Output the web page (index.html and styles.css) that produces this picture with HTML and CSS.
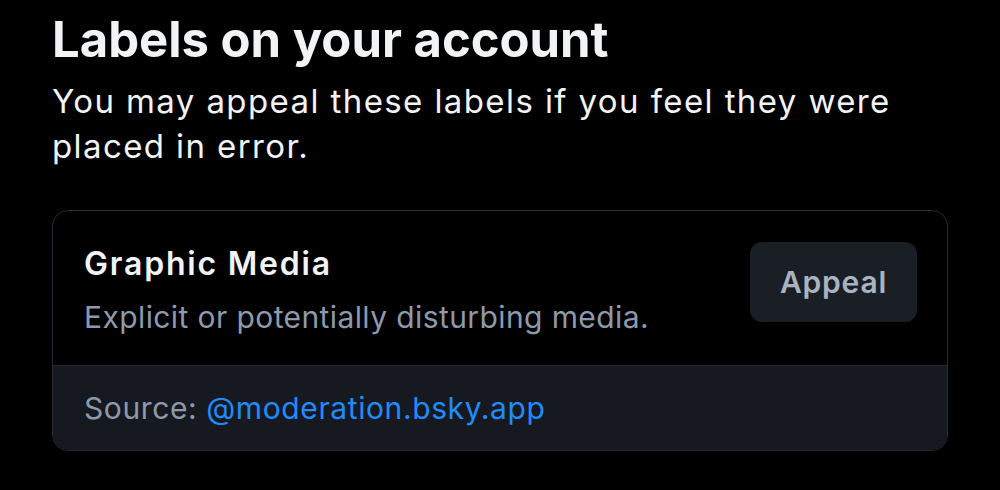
FILE: index.html
```html
<!DOCTYPE html>
<html>
<head lang="en">
    <meta charset="UTF-8">
    <title>Labels on your account</title>
    <link rel="stylesheet" href="styles.css">
</head>
<body>
    <div id="page">
        <h1 class="title">Labels on your account</h1>
        <p class="intro">You may appeal these labels if you feel they were placed in error.</p>
        <div class="card">
            <div class="card-main">
                <div class="card-text">
                    <div class="label-name">Graphic Media</div>
                    <div class="label-desc">Explicit or potentially disturbing media.</div>
                </div>
                <button class="appeal">Appeal</button>
            </div>
            <div class="card-source">
                Source: <a href="#" class="source-link">@moderation.bsky.app</a>
            </div>
        </div>
    </div>
</body>
</html>
```

FILE: styles.css
```css
*{
    margin: 0;
    padding: 0;
    box-sizing: border-box;
}
body{
    background: #000;
    color: #f1f3f5;
    font-family: Inter, "Noto Sans", sans-serif;
}
#page{
    width: 896px;
    margin-left: 52px;
    padding-top: 10px;
}
.title{
    font-size: 49px;
    font-weight: 700;
    line-height: 60px;
    letter-spacing: 0;
}
.intro{
    font-size: 33px;
    line-height: 45px;
    letter-spacing: 1.4px;
    margin-top: 9px;
}
.card{
    margin-top: 41px;
    border: 1px solid #272c34;
    border-radius: 16px;
    overflow: hidden;
}
.card-main{
    display: flex;
    align-items: flex-start;
    justify-content: space-between;
    padding: 33px 30px 0 31px;
    height: 155px;
    border-bottom: 1px solid #272c34;
}
.label-name{
    font-size: 32px;
    font-weight: 600;
    line-height: 40px;
    letter-spacing: 1.8px;
}
.label-desc{
    font-size: 30px;
    line-height: 40px;
    letter-spacing: 0.4px;
    margin-top: 13px;
    color: #8d9aab;
}
.appeal{
    width: 167px;
    height: 80px;
    margin-top: -2px;
    border: none;
    border-radius: 12px;
    background: #1a1f26;
    color: #a9b3c1;
    font-family: Inter, "Noto Sans", sans-serif;
    font-size: 30px;
    font-weight: 600;
    letter-spacing: 0.8px;
}
.card-source{
    background: #161a20;
    height: 84px;
    padding-left: 31px;
    font-size: 30px;
    line-height: 84px;
    letter-spacing: 0.6px;
    color: #8d9aab;
}
.source-link{
    color: #208bfe;
    text-decoration: none;
}
```
